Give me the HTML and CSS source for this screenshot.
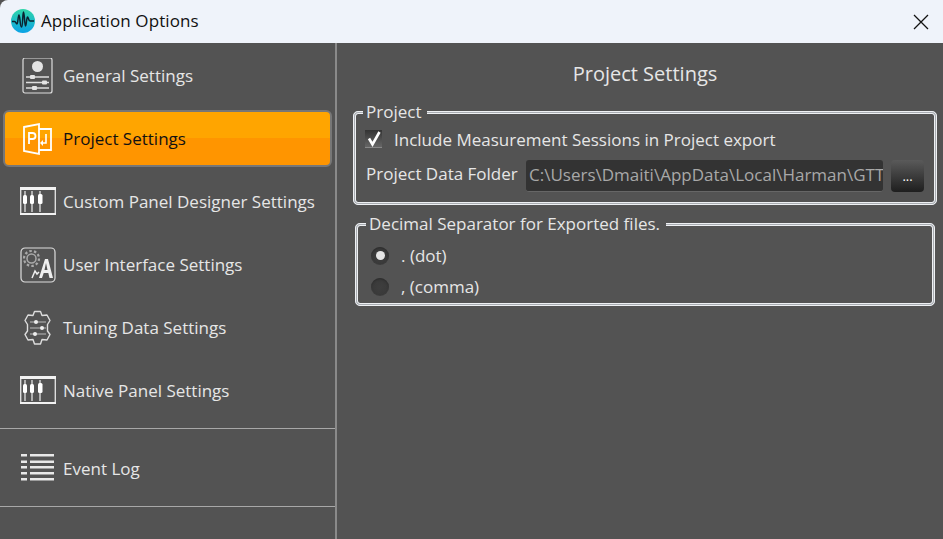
FILE: index.html
```
<!DOCTYPE html>
<html lang="en">
<head>
<meta charset="utf-8">
<title>Application Options</title>
<link rel="stylesheet" href="styles.css">
</head>
<body>
<div class="window">
  <header class="titlebar">
    <svg class="logo" viewBox="0 0 24 24"><defs><linearGradient id="lg" x1="0" y1="0" x2="0" y2="1"><stop offset="0" stop-color="#2fd6a8"/><stop offset="1" stop-color="#0aa2e6"/></linearGradient></defs><circle cx="12" cy="12" r="12" fill="url(#lg)"/><path d="M1 12.500h2.500c1.500 0 1.500 2.500 2.500 2.500s1-9 2-9 1 12 2.500 12 1-15 2-15 1 14 2 14 1-9 2-9 1 4 2.500 4H23" fill="none" stroke="#0b2230" stroke-width="1.500"/></svg>
    <span class="window-title">Application Options</span>
    <svg class="close" viewBox="0 0 16 16"><path d="M1 1l14 14M15 1L1 15" stroke="#111" stroke-width="1.300" fill="none"/></svg>
  </header>
  <div class="main">
    <nav class="sidebar">
      <div class="item">
        <svg class="icon" viewBox="0 0 36 36"><g fill="none" stroke="#ddd"><rect x="3" y="0" width="29" height="35" rx="2" stroke-width="1.200"/><path d="M6 19h23M6 24.500h23M6 30h23" stroke-width="1.300"/></g><g fill="#e4e4e4"><circle cx="17.500" cy="8.500" r="5.500"/><rect x="10" y="17" width="5" height="4" rx="1"/><rect x="22" y="22.500" width="5" height="4" rx="1"/><rect x="12" y="28" width="5" height="4" rx="1"/></g></svg>
        <span>General Settings</span>
      </div>
      <div class="item selected">
        <svg class="icon" viewBox="0 0 36 36"><path d="M4 6l15-3v30L4 30z" fill="none" stroke="#fff" stroke-width="1.800"/><path d="M19 8h12v21H19" fill="none" stroke="#fff" stroke-width="1.800"/><path d="M26 13v9h-3" fill="none" stroke="#fff" stroke-width="1.600"/><path d="M23 19v6l-3-3z" fill="#fff"/><path d="M9 23V12h3.500a3 3 0 0 1 0 6H9" fill="none" stroke="#fff" stroke-width="1.800"/></svg>
        <span>Project Settings</span>
      </div>
      <div class="item">
        <svg class="icon" viewBox="0 0 36 36"><use href="#panel"/></svg>
        <span>Custom Panel Designer Settings</span>
      </div>
      <div class="item">
        <svg class="icon" viewBox="0 0 36 36"><rect x="1" y="1" width="34" height="34" rx="4" fill="none" stroke="#ddd" stroke-width="1.200"/><circle cx="11.500" cy="11.500" r="4.500" fill="none" stroke="#aaa" stroke-width="1.500"/><circle cx="11.500" cy="11.500" r="7.500" fill="none" stroke="#aaa" stroke-width="2.200" stroke-dasharray="2.500 2.200"/><path d="M19 31l6-19h3l5 19h-3.500l-1.200-5h-4.600L22 31zM24.500 23h3l-1.500-7z" fill="#eee" fill-rule="evenodd"/><path d="M12 31l3-7 2 3 2-2" fill="none" stroke="#eee" stroke-width="1.500"/></svg>
        <span>User Interface Settings</span>
      </div>
      <div class="item">
        <svg class="icon" viewBox="0 0 36 36"><path d="M14.500 1.500h6l1.500 4 5-.5 3 5.500-2.500 4v6.500l2.500 3.500-3 5.500-5-.5-1.500 4.500h-6l-1.500-4.500-5 .5-3-5.500 2.500-3.500V14.500L5 10.500 8 5l5 .5z" fill="none" stroke="#ddd" stroke-width="1.400" stroke-linejoin="round"/><path d="M10 12h16M10 18h16M10 24h16" stroke="#999" stroke-width="1.400"/><circle cx="16" cy="12" r="2" fill="#eee"/><circle cx="22" cy="18" r="2" fill="#eee"/><circle cx="15" cy="24" r="2" fill="#eee"/></svg>
        <span>Tuning Data Settings</span>
      </div>
      <div class="item">
        <svg class="icon" viewBox="0 0 36 36"><defs><g id="panel"><rect x="0.700" y="5" width="34.600" height="25" fill="none" stroke="#ddd" stroke-width="1.400"/><rect x="0" y="3" width="36" height="3" fill="#f2f2f2"/><rect x="0" y="29" width="36" height="2" fill="#f2f2f2"/><path d="M5 7v21M12 7v21M20 7v21" stroke="#eee" stroke-width="1.200"/><rect x="3" y="11" width="4" height="9" rx="1.500" fill="#fff"/><rect x="10" y="11" width="4" height="9" rx="1.500" fill="#fff"/><rect x="18" y="10" width="4.500" height="10" rx="1.500" fill="#fff"/></g></defs><use href="#panel"/></svg>
        <span>Native Panel Settings</span>
      </div>
      <div class="item log">
        <svg class="icon" viewBox="0 0 36 36"><g fill="#e8e8e8"><rect x="1" y="3" width="6" height="2.500"/><rect x="10" y="3" width="24" height="2.500"/><rect x="1" y="9.500" width="6" height="2.500"/><rect x="10" y="9.500" width="24" height="2.500"/><rect x="1" y="15" width="6" height="2.500"/><rect x="10" y="15" width="24" height="2.500"/><rect x="1" y="21" width="6" height="2.500"/><rect x="10" y="21" width="24" height="2.500"/><rect x="1" y="27" width="6" height="2.500"/><rect x="10" y="27" width="24" height="2.500"/></g></svg>
        <span>Event Log</span>
      </div>
    </nav>
    <section class="content">
      <h1 class="heading">Project Settings</h1>
      <fieldset class="group group-project">
        <legend>Project</legend>
        <label class="check-row">
          <span class="checkbox"><svg viewBox="0 0 18 18"><path d="M4 8.500l3.500 6L14.500 2" fill="none" stroke="#fff" stroke-width="2.600"/></svg></span>
          <span>Include Measurement Sessions in Project export</span>
        </label>
        <div class="folder-row">
          <span class="folder-label">Project Data Folder</span>
          <div class="path">C:\Users\Dmaiti\AppData\Local\Harman\GTT</div>
          <div class="browse">...</div>
        </div>
      </fieldset>
      <fieldset class="group group-decimal">
        <legend>Decimal Separator for Exported files.</legend>
        <div class="radio-row"><span class="radio on"></span><span>. (dot)</span></div>
        <div class="radio-row"><span class="radio"></span><span>, (comma)</span></div>
      </fieldset>
    </section>
  </div>
</div>
</body>
</html>
```
FILE: styles.css
```
* { box-sizing: border-box; }
html, body { margin: 0; height: 100%; }
body { background: #535353; font-family: "Open Sans", "Noto Sans", sans-serif; font-size: 17px; color: #e6e6e6; overflow: hidden; }
.window { width: 943px; height: 539px; display: flex; flex-direction: column; }
.titlebar { height: 43px; flex: none; display: flex; align-items: center; padding: 0 14px 0 11px; background: #eff3fa; color: #111; border-top-left-radius: 8px; }
.logo { width: 24px; height: 24px; flex: none; margin-top: -1px; }
.window-title { margin: -2px 0 0 6px; font-size: 17px; letter-spacing: .1px; }
.close { width: 16px; height: 16px; margin-left: auto; }
.main { flex: 1; display: flex; min-height: 0; }
.sidebar { width: 337px; flex: none; padding-top: 1px; border-right: 2px solid #8a8a8a; display: flex; flex-direction: column; }
.item { height: 63px; flex: none; display: flex; align-items: center; padding-left: 20px; gap: 7px; white-space: nowrap; }
.icon { width: 36px; height: 36px; flex: none; }
.selected { height: 57px; margin: 3px 3px 3px 3px; padding-left: 15px; background: linear-gradient(#ffa500 0 50%, #ff9500 50%); border: 2px solid #777; border-radius: 6px; color: #111; }
.log { height: 79px; margin-top: 6px; padding-top: 2px; border-top: 1px solid #a8a8a8; border-bottom: 1px solid #a8a8a8; }
.content { flex: 1; padding: 17px 6px 0 16px; }
.heading { margin: 0 0 14px; text-align: center; font-size: 20px; font-weight: 400; line-height: 28px; }
.group { margin: 0; border: 3px double #eef0f3; border-radius: 5px; padding: 0; background: linear-gradient(#535353, #535353) padding-box, #a9adb2 border-box; }
.group legend { padding: 0 6px 0 3px; line-height: 20px; background: #535353; }
.group-project { height: 103px; width: 584px; }
.group-project legend { margin-left: 7px; }
.group-decimal { height: 92px; width: 580px; margin: 9px 0 0 2px; }
.group-decimal legend { margin-left: 8px; }
.check-row { display: flex; align-items: center; gap: 12px; height: 24px; margin: 5px 0 0 9px; }
.checkbox { width: 17px; height: 18px; background: linear-gradient(#333, #666); border-bottom: 1px solid #888; display: block; }
.checkbox svg { display: block; width: 18px; height: 18px; }
.folder-row { display: flex; align-items: center; margin: 9px 0 0 9px; }
.folder-label { width: 160px; margin-left: 1px; flex: none; margin-top: -6px; }
.path { width: 357px; height: 32px; line-height: 30px; padding-left: 3px; background: #333; border-radius: 3px; border-bottom: 1px solid #666; color: #a8a8a8; overflow: hidden; white-space: nowrap; flex: none; }
.browse { width: 33px; height: 32px; margin-left: 8px; border-radius: 4px; background: linear-gradient(#5a5a5a, #1e1e1e); color: #fff; text-align: center; line-height: 32px; flex: none; font-size: 13px; }
.radio-row { display: flex; align-items: center; gap: 12px; height: 31px; margin-left: 13px; }
.radio-row:first-of-type { margin-top: 6px; }
.radio { width: 18px; height: 18px; border-radius: 50%; background: radial-gradient(circle, #3e3e3e 0, #3a3a3a 60%, #555 100%); box-shadow: inset 0 1px 2px #2a2a2a; display: flex; align-items: center; justify-content: center; }
.radio.on::after { content: ""; width: 9px; height: 9px; border-radius: 50%; background: #e6e6e6; }
```
